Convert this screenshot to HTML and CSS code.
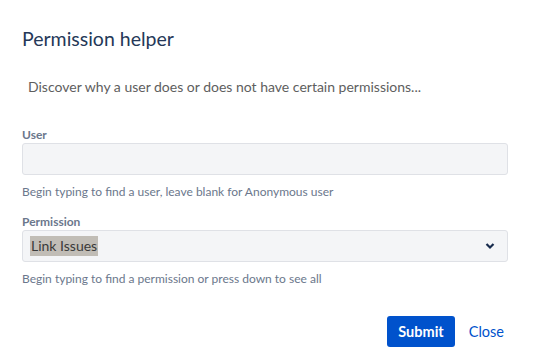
FILE: index.html
```html
<!DOCTYPE html>
<html>
<head>
<meta charset="utf-8">
<link rel="stylesheet" href="styles.css">
</head>
<body>
<div class="dialog">
  <h2 class="title">Permission helper</h2>
  <p class="desc">Discover why a user does or does not have certain permissions...</p>
  <form class="form">
    <div class="field">
      <label class="label">User</label>
      <div class="input"></div>
      <div class="hint">Begin typing to find a user, leave blank for Anonymous user</div>
    </div>
    <div class="field">
      <label class="label">Permission</label>
      <div class="input select">
        <span class="selected">Link Issues</span>
        <svg class="chev" width="10" height="8" viewBox="0 0 10 8"><path d="M1.5 2 L5 5.5 L8.5 2" fill="none" stroke="#172B4D" stroke-width="2.2"/></svg>
      </div>
      <div class="hint">Begin typing to find a permission or press down to see all</div>
    </div>
    <div class="actions">
      <button type="button" class="btn">Submit</button>
      <a class="link">Close</a>
    </div>
  </form>
</div>
</body>
</html>
```
FILE: styles.css
```css
* { box-sizing: border-box; }
html, body { margin: 0; padding: 0; background: #fff; }
body { font-family: Lato, "Open Sans", sans-serif; color: #172B4D; }
.dialog { width: 534px; height: 364px; padding: 25px 26px 0 22px; }
.title { margin: 0; font-size: 19.5px; font-weight: 400; color: #253858; line-height: 28px; }
.desc { margin: 24px 0 0 6px; font-size: 14px; color: #5E5E5E; line-height: 20px; }
.form { margin-top: 32px; }
.field { display: flex; flex-direction: column; }
.label { font-size: 12px; font-weight: 700; color: #6B778C; line-height: 12px; }
.input { margin-top: 2px; height: 32px; width: 486px; background: #F4F5F7; border: 1px solid #DFE1E6; border-radius: 3px; }
.select { display: flex; align-items: center; justify-content: space-between; padding: 0 12px 0 7px; }
.selected { background: #C1BDB6; color: #3A3A3A; font-size: 14px; line-height: 20px; padding: 0 1px; }
.chev { display: block; }
.hint { margin-top: 9px; font-size: 12px; color: #6B778C; line-height: 16px; height: 32px; }
.actions { display: flex; justify-content: flex-end; align-items: center; gap: 14px; padding-right: 4px; margin-top: 13px; }
.btn { font-family: inherit; font-size: 14.5px; font-weight: 700; color: #fff; background: #0052CC; border: none; border-radius: 3px; height: 31px; padding: 0 11px; }
.link { font-size: 14.5px; color: #0052CC; }
```
